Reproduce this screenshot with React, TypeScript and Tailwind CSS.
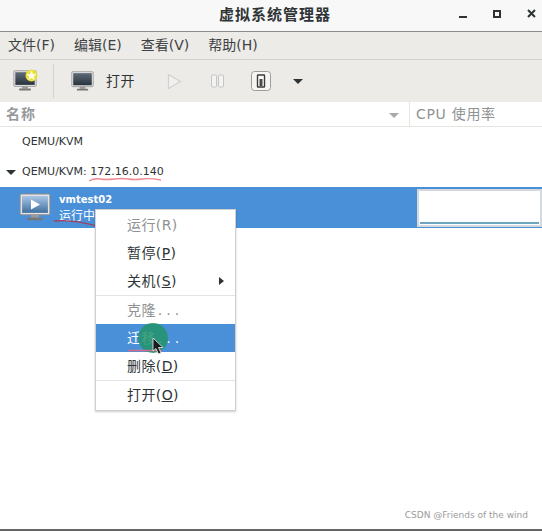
import React from "react";

const F = { fontFamily: '"DejaVu Sans","Noto Sans CJK SC",sans-serif' };

function Monitor({ w = 24, screen = "dark", play = false }: { w?: number; screen?: string; play?: boolean }) {
  const h = w * 0.9;
  return (
    <svg width={w} height={h} viewBox="0 0 32 29">
      <defs>
        <linearGradient id={"mg" + screen + w} x1="0" y1="0" x2="0" y2="1">
          <stop offset="0" stopColor={screen === "dark" ? "#5d6b78" : "#a9c6e6"} />
          <stop offset="1" stopColor={screen === "dark" ? "#2a333c" : "#3f6f9f"} />
        </linearGradient>
      </defs>
      <rect x="1" y="1" width="30" height="21" rx="1.5" fill="#e4e4e4" stroke="#8a8a8a" />
      <rect x="3" y="3" width="26" height="17" fill={`url(#mg${screen}${w})`} />
      <rect x="12" y="22" width="8" height="3" fill="#9a9a9a" />
      <rect x="8" y="25" width="16" height="2.5" rx="1" fill="#777" />
      {play && <path d="M12 6.5 L21 11.5 L12 16.5 Z" fill="#fff" />}
    </svg>
  );
}

function ToolSep() {
  return <div className="w-px h-[34px] bg-[#d5d2ce]" />;
}

function MenuItem({ children, disabled, active, border, arrow }: { children: React.ReactNode; disabled?: boolean; active?: boolean; border?: boolean; arrow?: boolean }) {
  return (
    <div
      className={`relative pl-[31px] flex items-center text-[14px] leading-none tracking-[0.4px] ${border ? "border-t border-[#e3e3e3] h-[29px]" : "h-[28px]"} ${active ? "bg-[#4a90d9] text-white" : disabled ? "text-[#8f9292]" : "text-[#2e3436]"}`}
    >
      {children}
      {arrow && <span className="absolute right-[11px] top-[10px] border-y-[4px] border-y-transparent border-l-[5px] border-l-[#2e3436]" />}
    </div>
  );
}

export default function App() {
  return (
    <div className="relative w-[542px] h-[531px] bg-white overflow-hidden flex flex-col text-[#2e3436]" style={F}>
      <div className="h-[32px] shrink-0 bg-[#f8f8f8] border-b border-[#8b8b8b] relative flex items-center justify-center pl-[8px]">
        <span className="text-[15px] font-bold text-[#2e3436] tracking-[1px]">虚拟系统管理器</span>
        <div className="absolute right-[6px] top-[9px] flex items-center gap-[26px]">
          <span className="w-[8px] h-[2px] bg-[#2e3436] mt-[7px]" />
          <span className="w-[8px] h-[8px] border-2 border-[#2e3436]" />
          <svg width="9" height="9" viewBox="0 0 9 9"><path d="M1 1 L8 8 M8 1 L1 8" stroke="#2e3436" strokeWidth="2" /></svg>
        </div>
      </div>

      <div className="h-[28px] shrink-0 bg-[#edebe7] border-b border-[#d4d1cd] flex items-center pl-[8px] gap-[19px] text-[14px] text-[#3d4244]">
        <span>文件(F)</span>
        <span>编辑(E)</span>
        <span>查看(V)</span>
        <span>帮助(H)</span>
      </div>

      <div className="h-[42px] shrink-0 bg-[#edebe7] flex items-center pl-[13px]">
        <div className="relative w-[24px] h-[24px] flex items-center">
          <Monitor w={24} />
          <svg className="absolute right-[-1px] top-0" width="13" height="13" viewBox="0 0 13 13">
            <circle cx="6.5" cy="6.5" r="6" fill="#e8e23a" />
            <path d="M6.5 1.5 L8 5 L11.5 5.2 L8.8 7.5 L9.7 11 L6.5 9 L3.3 11 L4.2 7.5 L1.5 5.2 L5 5 Z" fill="#fffde8" />
          </svg>
        </div>
        <div className="ml-[16px] mr-[17px]"><ToolSep /></div>
        <Monitor w={23} />
        <span className="ml-[12px] text-[14px] tracking-[0.5px]">打开</span>
        <svg className="ml-[32px]" width="15" height="17" viewBox="0 0 15 17"><path d="M1.5 1.5 L13.5 8.5 L1.5 15.5 Z" fill="#f1f0ee" stroke="#cfd0d0" strokeWidth="1.2" /></svg>
        <svg className="ml-[29px]" width="13" height="14" viewBox="0 0 13 14">
          <rect x="0.5" y="1" width="5" height="12" rx="1" fill="#f4f3f1" stroke="#c4c5c5" />
          <rect x="7.5" y="1" width="5" height="12" rx="1" fill="#f4f3f1" stroke="#c4c5c5" />
        </svg>
        <svg className="ml-[27px]" width="20" height="20" viewBox="0 0 20 20">
          <rect x="0.5" y="0.5" width="19" height="19" rx="3" fill="#f6f5f3" stroke="#9c9c9c" />
          <rect x="6.5" y="4" width="7" height="12" rx="0.5" fill="#fff" stroke="#3a3a3a" strokeWidth="1.4" />
          <rect x="8.5" y="8" width="3" height="7" fill="#4a4a4a" />
        </svg>
        <span className="ml-[22px] mt-[1px] border-x-[5px] border-x-transparent border-t-[5px] border-t-[#2e3436]" />
      </div>

      <div className="h-[25px] shrink-0 bg-white border-b border-[#e6e4df] flex text-[14px] text-[#8f9292]">
        <div className="w-[410px] border-r border-[#e6e4df] pl-[6px] flex items-center relative font-bold text-[#96999a] tracking-[1px]">
          名称
          <span className="absolute right-[10px] top-[11px] border-x-[5px] border-x-transparent border-t-[5px] border-t-[#a8aaaa]" />
        </div>
        <div className="pl-[6px] flex items-center tracking-[0.7px]">CPU 使用率</div>
      </div>

      <div className="h-[30px] flex items-center pl-[22px] text-[11px]">QEMU/KVM</div>
      <div className="h-[30px] flex items-center pl-[6px] text-[11px] relative">
        <span className="border-x-[5px] border-x-transparent border-t-[5px] border-t-[#2e3436] mr-[6px]" />
        QEMU/KVM:&nbsp;<span>172.16.0.140</span>
        <svg className="absolute left-[88px] top-[20px]" width="74" height="5" viewBox="0 0 74 5">
          <path d="M1 4 Q6 1 12 2 T26 2 T40 2 T54 2 T73 3" fill="none" stroke="#ef8a92" strokeWidth="1.3" />
        </svg>
      </div>
      <div className="h-[41px] bg-[#4a90d9] relative flex items-center pl-[19px] text-white">
        <Monitor w={32} screen="blue" play />
        <div className="ml-[8px] flex flex-col leading-[16px]">
          <span className="font-bold text-[10px]">vmtest02</span>
          <span className="text-[12px]">运行中</span>
        </div>
        <svg className="absolute left-[53px] top-[32px]" width="48" height="9" viewBox="0 0 48 9">
          <path d="M1 2 Q20 0 47 8" fill="none" stroke="#a0405a" strokeWidth="1.3" />
        </svg>
        <div className="absolute left-[417px] top-[2px] w-[125px] h-[38px] bg-white border-2 border-[#d5d8dc] flex items-end pb-[1px] px-[1px]">
          <div className="w-full h-[2px] bg-[#6fa6bf]" />
        </div>
      </div>
      <div className="flex-1" />
      <div className="h-[22px] shrink-0 flex items-start justify-end pr-[14px] pt-[2px] text-[9px] text-[#9b9b9b]">CSDN @Friends of the wind</div>
      <div className="h-[2px] shrink-0 bg-[#666]" />

      <div className="absolute left-[95px] top-[209px] w-[141px] bg-white border border-[#cfcfcf] shadow-[0_1px_2px_rgba(0,0,0,0.2)] pt-[1px] pb-[1px]">
        <MenuItem disabled>运行(R)</MenuItem>
        <MenuItem>暂停(<u>P</u>)</MenuItem>
        <MenuItem arrow>关机(<u>S</u>)</MenuItem>
        <MenuItem disabled border><span>克隆</span><span className="tracking-[4px] ml-[2px]">...</span></MenuItem>
        <MenuItem active><span>迁移</span><span className="tracking-[4px] ml-[2px]">...</span></MenuItem>
        <MenuItem>删除(<u>D</u>)</MenuItem>
        <MenuItem border>打开(<u>O</u>)</MenuItem>
      </div>

      <div className="absolute left-[138px] top-[323px] w-[30px] h-[30px] rounded-full bg-[#22936a]/85" />
      <svg className="absolute left-[128px] top-[349px]" width="34" height="3" viewBox="0 0 34 3">
        <path d="M0 1.5 H34" stroke="#d0708a" strokeWidth="1.5" />
      </svg>
      <svg className="absolute left-[151px] top-[337px]" width="14" height="19" viewBox="0 0 14 19">
        <path d="M2 1 L2 14 L5 11.5 L7.5 17 L10 16 L7.5 10.5 L12 10.5 Z" fill="#1b1b1b" stroke="#eee" strokeWidth="0.8" />
      </svg>
    </div>
  );
}
